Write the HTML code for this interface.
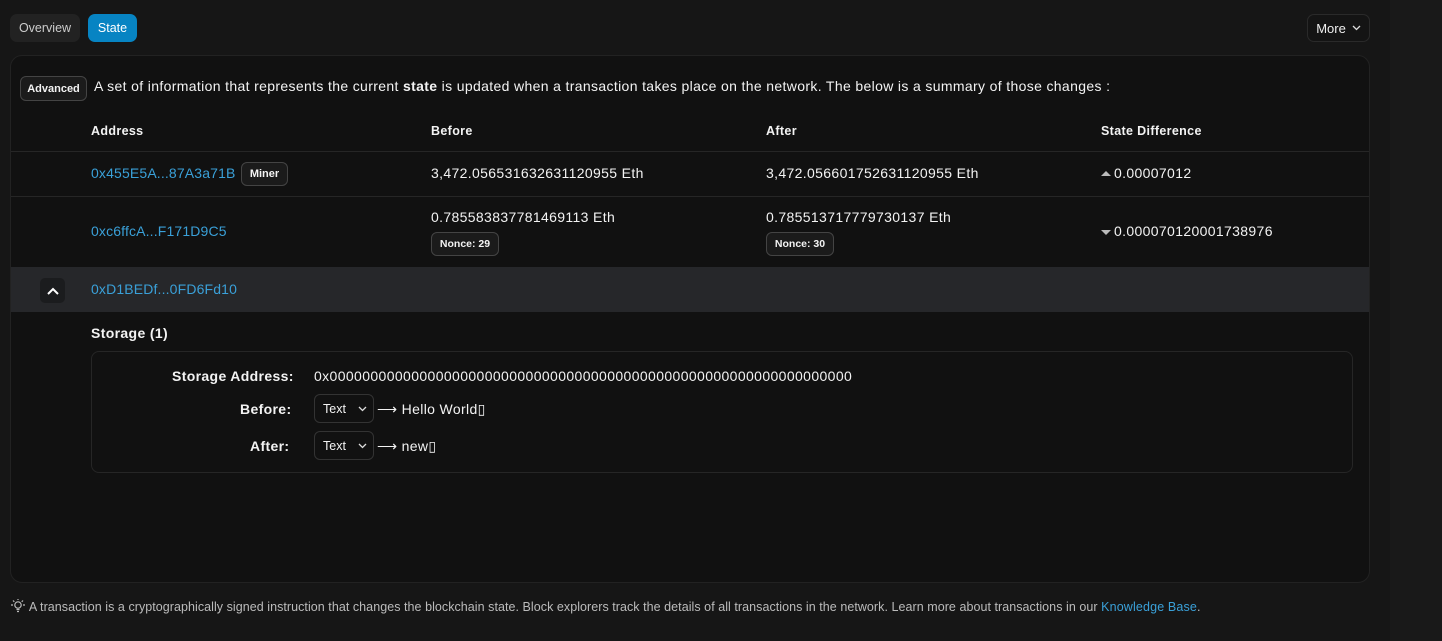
<!DOCTYPE html>
<html><head><meta charset="utf-8"><style>
*{box-sizing:border-box;margin:0;padding:0}
body{width:1442px;height:641px;background:#161616;font-family:"Liberation Sans",sans-serif;color:#f3f3f3;position:relative;overflow:hidden;font-size:14px;letter-spacing:0.35px}
.right{position:absolute;left:1390px;top:0;width:52px;height:641px;background:#191919}
.btn{position:absolute;border-radius:7px;font-size:12.5px;display:flex;align-items:center;justify-content:center}
.card{position:absolute;left:10px;top:55px;width:1360px;height:528px;background:#111;border:1px solid #222;border-radius:12px;overflow:hidden}
.abs{position:absolute;white-space:nowrap}
.badge{position:absolute;border:1px solid #444;background:#1b1b1b;border-radius:6px;font-size:11px;font-weight:bold;display:flex;align-items:center;justify-content:center;letter-spacing:0}
.link{color:#3aa0d8;letter-spacing:0.15px}
.hr{position:absolute;left:0;width:100%;height:1px;background:#262626}
.b{font-weight:bold}
.sel{position:absolute;border:1px solid #333;border-radius:6px;width:60px;height:29px;font-size:12.5px;display:flex;align-items:center;padding-left:8px;letter-spacing:0}
.t{position:relative;top:1px}
</style></head><body>
<div class="right"></div>
<div class="btn" style="left:10px;top:14px;width:70px;height:28px;background:#222;color:#ccc;letter-spacing:0">Overview</div>
<div class="btn" style="left:88px;top:14px;width:49px;height:28px;background:#0784c3;color:#fff;letter-spacing:0">State</div>
<div class="btn" style="left:1307px;top:14px;width:63px;height:28px;border:1px solid #2a2a2a;background:#141414;color:#eee;font-size:13px;letter-spacing:0">More <svg width="9" height="6" style="margin-left:6px"><path d="M1 1L4.5 4.5L8 1" stroke="#ddd" stroke-width="1.3" fill="none"/></svg></div>
<div class="card">
 <div class="badge" style="left:9px;top:20px;width:67px;height:25px">Advanced</div>
 <div class="abs t" style="left:83px;top:22px">A set of information that represents the current <b>state</b> is updated when a transaction takes place on the network. The below is a summary of those changes :</div>
 <div class="abs b" style="left:80px;top:68px;font-size:12.5px">Address</div>
 <div class="abs b" style="left:420px;top:68px;font-size:12.5px">Before</div>
 <div class="abs b" style="left:755px;top:68px;font-size:12.5px">After</div>
 <div class="abs b" style="left:1090px;top:68px;font-size:12.5px">State Difference</div>
 <div class="hr" style="top:95px"></div>
 <div class="abs link" style="left:80px;top:109px">0x455E5A...87A3a71B</div>
 <div class="badge" style="left:230px;top:106px;width:47px;height:24px">Miner</div>
 <div class="abs" style="left:420px;top:109px">3,472.056531632631120955 Eth</div>
 <div class="abs" style="left:755px;top:109px">3,472.056601752631120955 Eth</div>
 <div class="abs" style="left:1090px;top:109px"><svg width="10" height="8" style="margin-right:3px"><path d="M0 6L5 1L10 6Z" fill="#bbb"/></svg>0.00007012</div>
 <div class="hr" style="top:140px"></div>
 <div class="abs link" style="left:80px;top:167px">0xc6ffcA...F171D9C5</div>
 <div class="abs" style="left:420px;top:153px">0.785583837781469113 Eth</div>
 <div class="badge" style="left:420px;top:176px;width:68px;height:24px;font-size:10.5px">Nonce: 29</div>
 <div class="abs" style="left:755px;top:153px">0.785513717779730137 Eth</div>
 <div class="badge" style="left:755px;top:176px;width:68px;height:24px;font-size:10.5px">Nonce: 30</div>
 <div class="abs" style="left:1090px;top:167px"><svg width="10" height="8" style="margin-right:3px"><path d="M0 2L5 7L10 2Z" fill="#bbb"/></svg>0.000070120001738976</div>
 <div class="abs" style="left:0;top:211px;width:1360px;height:45px;background:#26272a"></div>
 <div class="abs" style="left:29px;top:222px;width:25px;height:25px;background:#1b1c1e;border-radius:5px;display:flex;align-items:center;justify-content:center"><svg width="12" height="8"><path d="M1 7L6 2L11 7" stroke="#fff" stroke-width="2" fill="none"/></svg></div>
 <div class="abs link" style="left:80px;top:225px">0xD1BEDf...0FD6Fd10</div>
 <div class="abs b" style="left:80px;top:269px">Storage (1)</div>
 <div class="abs" style="left:80px;top:295px;width:1262px;height:122px;border:1px solid #262626;border-radius:8px"></div>
 <div class="abs b" style="left:161px;top:312px">Storage Address:</div>
 <div class="abs" style="left:303px;top:312px;letter-spacing:0.38px">0x0000000000000000000000000000000000000000000000000000000000000000</div>
 <div class="abs b" style="left:229px;top:345px">Before:</div>
 <div class="sel" style="left:303px;top:338px">Text <svg width="9" height="6" style="margin-left:12px"><path d="M1 1L4.5 4.5L8 1" stroke="#ddd" stroke-width="1.3" fill="none"/></svg></div>
 <div class="abs" style="left:366px;top:345px">&#10230; Hello World&#9647;</div>
 <div class="abs b" style="left:239px;top:382px">After:</div>
 <div class="sel" style="left:303px;top:375px">Text <svg width="9" height="6" style="margin-left:12px"><path d="M1 1L4.5 4.5L8 1" stroke="#ddd" stroke-width="1.3" fill="none"/></svg></div>
 <div class="abs" style="left:366px;top:382px">&#10230; new&#9647;</div>
</div>
<div class="abs" style="left:10px;top:599px;font-size:12.5px;color:#bbb;letter-spacing:0.05px"><svg width="16" height="14" style="vertical-align:-2px"><g stroke="#bbb" stroke-width="1.2" fill="none"><circle cx="8" cy="6" r="3.2"/><path d="M6.5 10.5h3M7 12.5h2M1 6h2M13 6h2M3 1.5l1.3 1.3M13 1.5l-1.3 1.3M8 0v1"/></g></svg> A transaction is a cryptographically signed instruction that changes the blockchain state. Block explorers track the details of all transactions in the network. Learn more about transactions in our <span class="link">Knowledge Base</span>.</div>
</body></html>
